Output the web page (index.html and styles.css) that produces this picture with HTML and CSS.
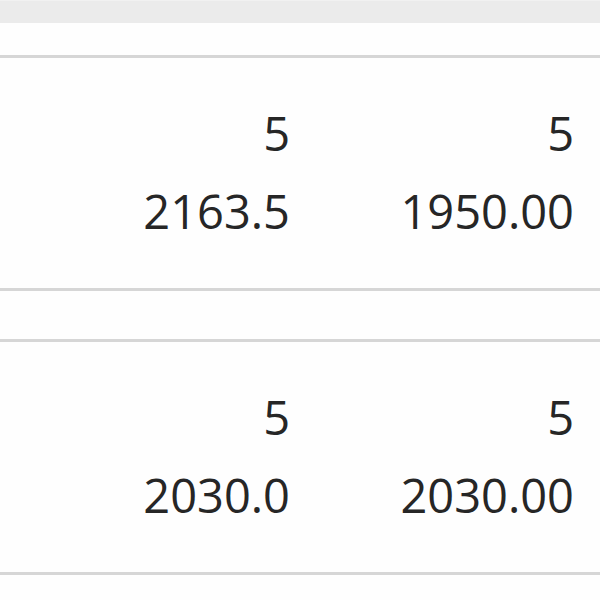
FILE: index.html
```html
<!DOCTYPE html>
<html>
<head>
<meta charset="utf-8">
<link rel="stylesheet" href="styles.css">
</head>
<body>
<div class="topbar"></div>
<div class="table">
  <div class="group">
    <div class="cell">5</div>
    <div class="cell">5</div>
    <div class="cell">2163.5</div>
    <div class="cell">1950.00</div>
  </div>
  <div class="group">
    <div class="cell">5</div>
    <div class="cell">5</div>
    <div class="cell">2030.0</div>
    <div class="cell">2030.00</div>
  </div>
</div>
</body>
</html>
```
FILE: styles.css
```css
html, body {
  margin: 0;
  padding: 0;
  background: #fefefe;
}
body {
  font-family: "Open Sans", "Liberation Sans", sans-serif;
  color: #262626;
  width: 600px;
  height: 600px;
  overflow: hidden;
}
.topbar {
  height: 23px;
  background: #ebebeb;
  box-sizing: border-box;
  border-top: 1px solid #f1f1f1;
}
.table {
  margin-top: 32px;
  display: flex;
  flex-direction: column;
  gap: 48px;
}
.group {
  border-top: 3px solid #d6d6d6;
  border-bottom: 3px solid #d6d6d6;
  padding: 36px 26px 38px 0;
  display: grid;
  grid-template-columns: 290px 284px;
  font-size: 47px;
  font-weight: 500;
  line-height: 78px;
}
.cell {
  text-align: right;
}
```
